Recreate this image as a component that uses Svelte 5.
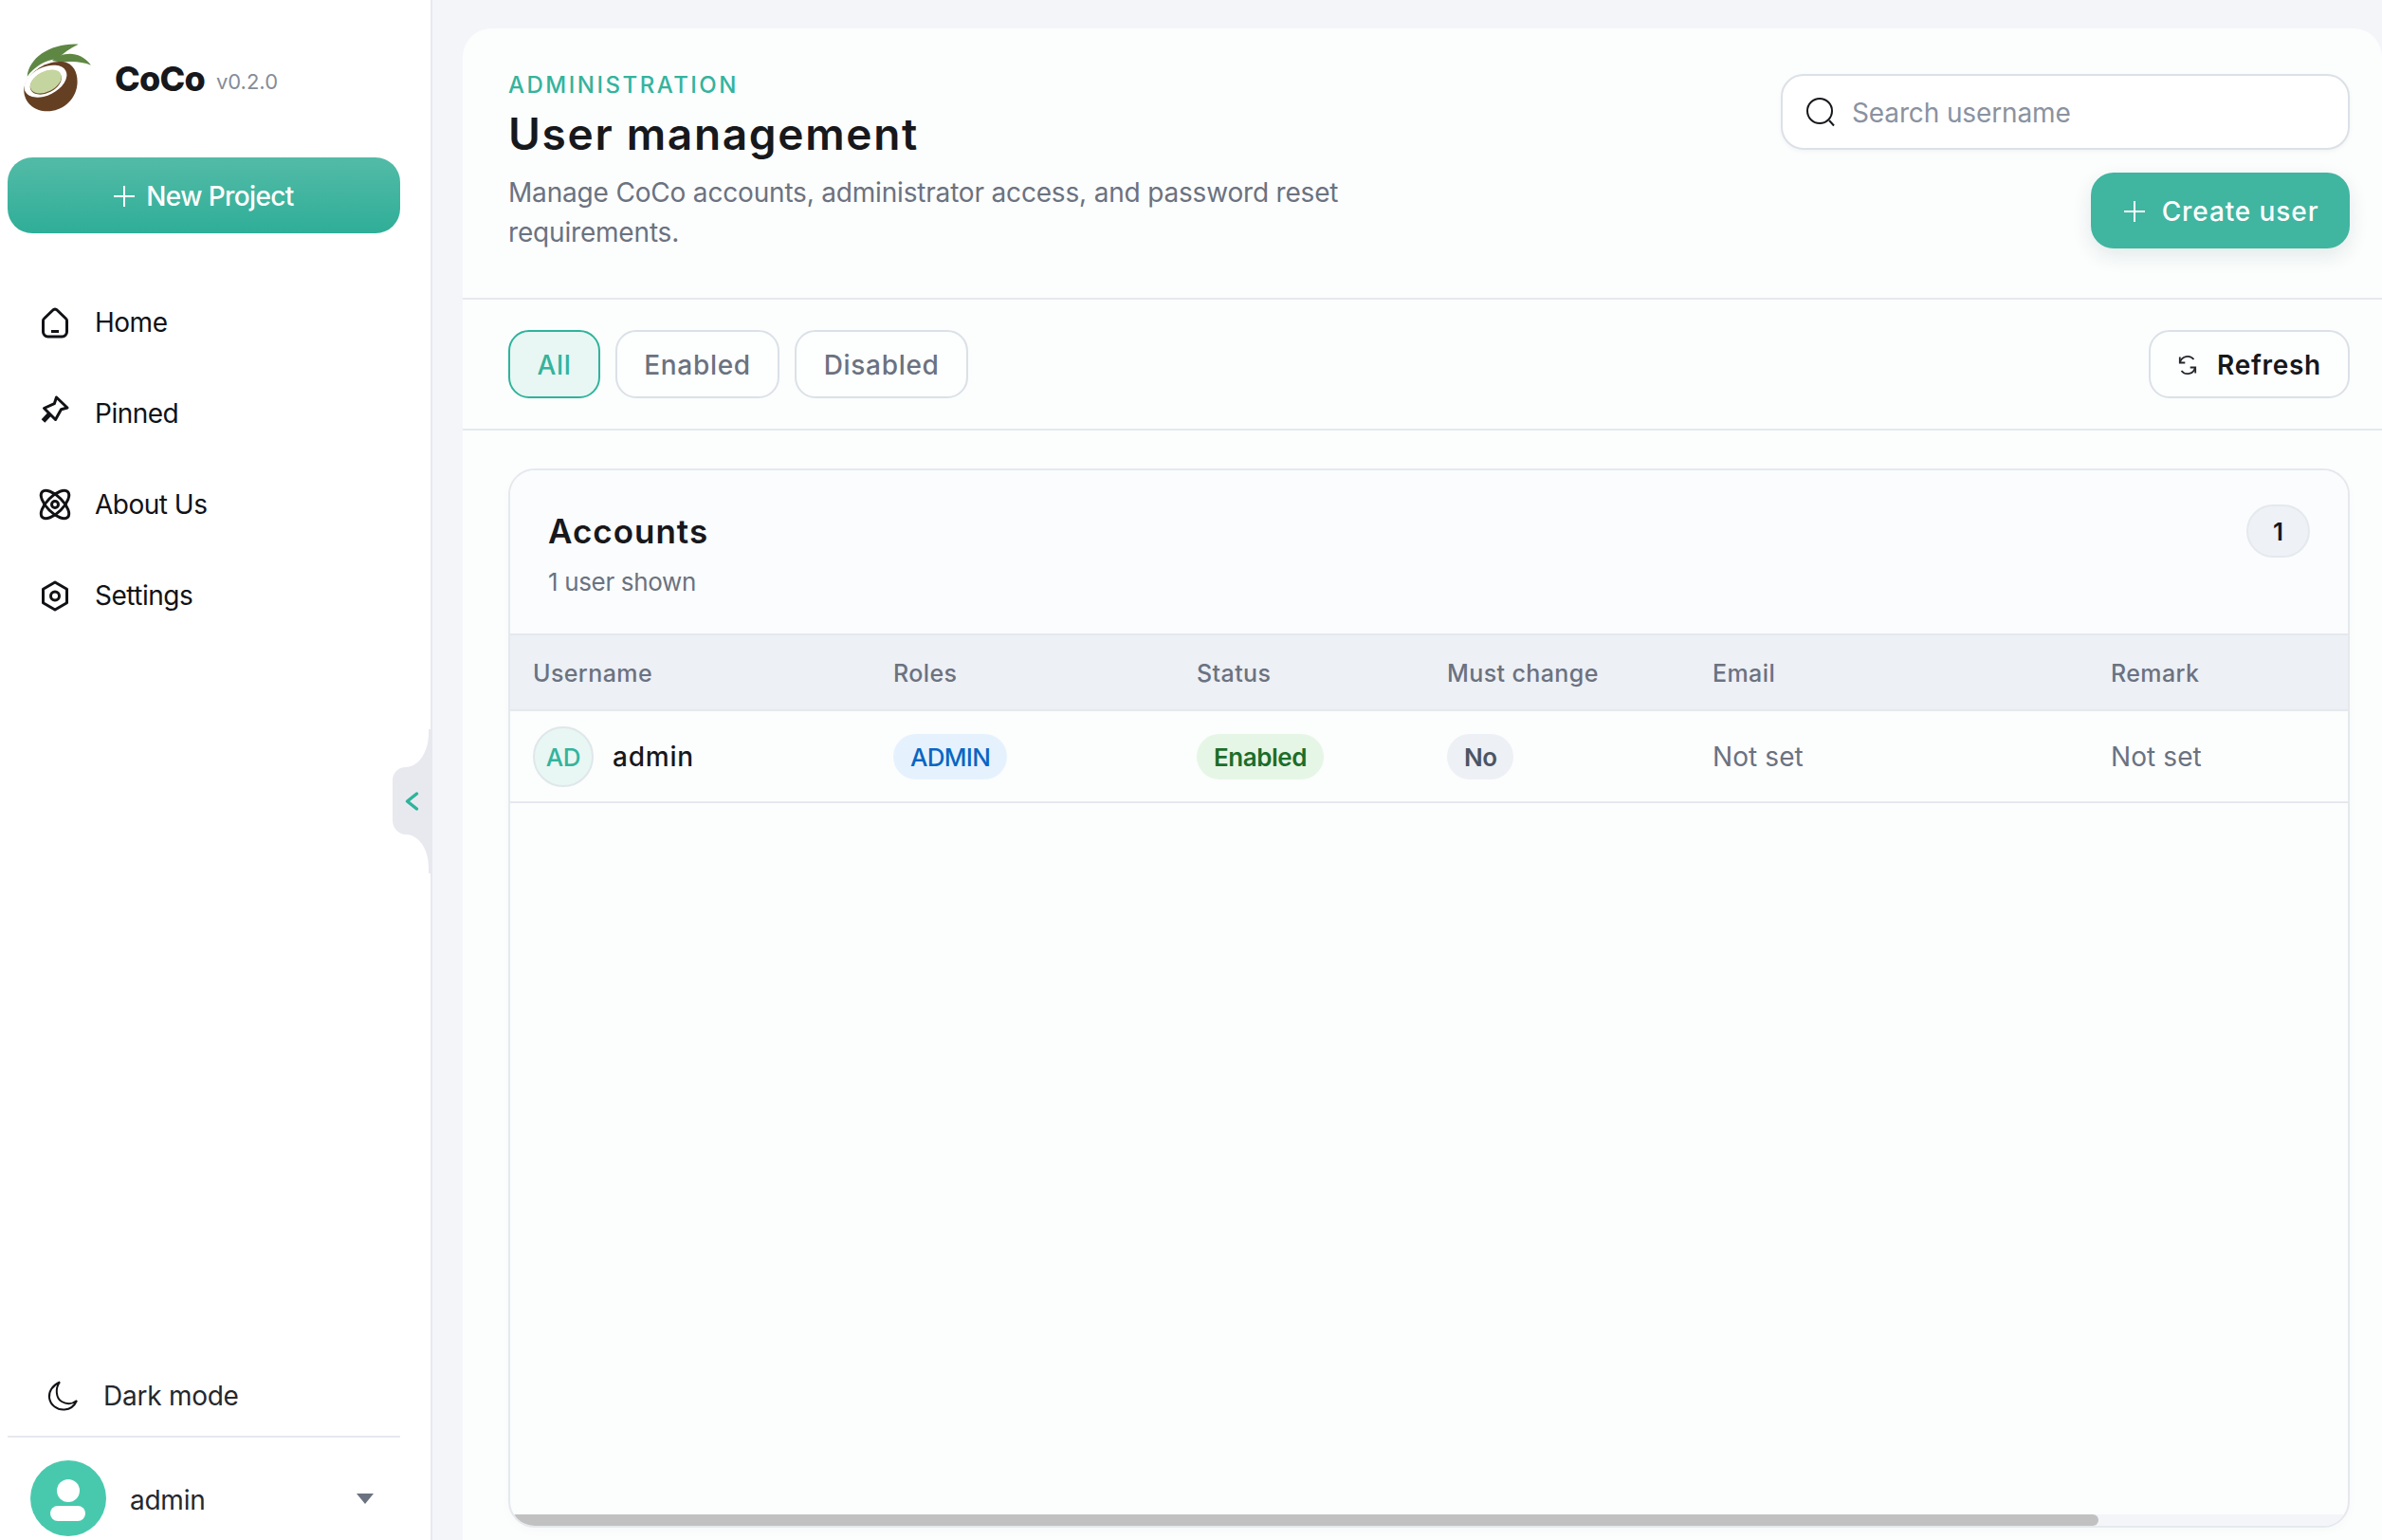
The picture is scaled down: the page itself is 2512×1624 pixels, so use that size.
<script>
  const nav = ['Home', 'Pinned', 'About Us', 'Settings'];
  const filters = ['All', 'Enabled', 'Disabled'];
  const columns = ['Username', 'Roles', 'Status', 'Must change', 'Email', 'Remark'];
  const tableWidth = 2240;
  const viewportWidth = 1936;
  const thumbShare = (viewportWidth / tableWidth) * 100;
</script>

<div class="app">
  <aside class="sidebar">
    <div class="brand">
      <svg class="logo" viewBox="45 45 216 219" aria-hidden="true">
        <path fill="#5f8744" d="M56 152C62 92 130 46 218 50C192 62 172 76 152 96C112 100 78 122 56 152Z"/>
        <path fill="#5f8744" d="M135 102C165 74 222 68 258 116C228 104 192 102 166 108C156 106 146 104 135 102Z"/>
        <path fill="#653f22" d="M46 188C56 138 120 98 172 106C205 112 218 145 214 180C208 228 165 262 120 262C75 262 42 230 46 188Z"/>
        <ellipse cx="114" cy="167" rx="72" ry="44" transform="rotate(-27 114 167)" fill="#fff"/>
        <ellipse cx="115" cy="171" rx="53" ry="33" transform="rotate(-27 115 171)" fill="#6f4c2c"/>
        <ellipse cx="115" cy="168" rx="53" ry="32" transform="rotate(-27 115 168)" fill="#c5d59f"/>
      </svg>
      <span class="name">CoCo</span>
      <span class="version">v0.2.0</span>
    </div>

    <button class="new-project">
      <svg class="plus" viewBox="0 0 22 22" aria-hidden="true"><path d="M11 0v22M0 11h22"/></svg>
      New Project
    </button>

    <nav class="nav">
      {#each nav as item}
        <a class="nav-item" href="#top">
          <span class="nav-icon">
            {#if item === 'Home'}
              <svg width="30" height="33" viewBox="0 0 30 33" aria-hidden="true"><path d="M15 2a3 3 0 0 1 2.200 1l9.300 9a3 3 0 0 1 1 2.300V26a5 5 0 0 1-5 5H7.500a5 5 0 0 1-5-5V14.300a3 3 0 0 1 1-2.300l9.300-9A3 3 0 0 1 15 2Z"/><path d="M11 25.500h8"/></svg>
            {:else if item === 'Pinned'}
              <svg class="pin" width="30" height="30" viewBox="0 0 30 30" aria-hidden="true"><path d="M16.500 2l11.500 11-6.500 1.800-6 10.700L3.500 13.500l10.800-4.800z" stroke-linejoin="round"/><path d="M9 20l-6.500 7" stroke-width="5"/></svg>
            {:else if item === 'About Us'}
              <svg width="30" height="30" viewBox="0 0 30 30" aria-hidden="true"><ellipse cx="15" cy="15" rx="19" ry="8.500" transform="rotate(45 15 15)"/><ellipse cx="15" cy="15" rx="19" ry="8.500" transform="rotate(-45 15 15)"/><circle cx="15" cy="15" r="3.500"/></svg>
            {:else}
              <svg width="30" height="33" viewBox="0 0 30 33" aria-hidden="true"><path d="M15 2l12.500 7.200v14.600L15 31 2.500 23.800V9.200L15 2Z" stroke-linejoin="round"/><circle cx="15" cy="16.500" r="4.500"/></svg>
            {/if}
          </span>
          {item}
        </a>
      {/each}
    </nav>

    <div class="sidebar-foot">
      <div class="dark-mode">
        <svg width="32" height="32" viewBox="0 0 32 32" aria-hidden="true"><path d="M13 1.500C5 5 1.200 12 2 18c1 7.500 8 13 16 12.500 6-.4 10.500-4 13-9.500-5 4-11 4-16 1C9 18.500 8 8 13 1.500Z"/></svg>
        Dark mode
      </div>
      <div class="user">
        <span class="avatar">
          <svg width="80" height="80" viewBox="0 0 80 80" aria-hidden="true"><circle cx="40" cy="32" r="12" fill="#fff"/><rect x="21" y="48" width="37" height="16" rx="8" fill="#fff"/></svg>
        </span>
        <span class="user-name">admin</span>
        <span class="caret"></span>
      </div>
    </div>

    <svg class="collapse" width="42" height="152" viewBox="0 0 42 152" aria-hidden="true">
      <path fill="#e8e9ef" d="M38 0V4C38 26 26 40 14 40C6 40 0 46 0 54V96C0 104 6 111 14 111C26 111 38 124 38 146V152H42V0Z"/>
      <path fill="none" stroke="#2fb39c" stroke-width="3.500" stroke-linecap="round" stroke-linejoin="round" d="M25.500 68L15.500 76L25.500 84"/>
    </svg>
  </aside>

  <main class="main">
    <section class="panel">
      <header class="panel-head">
        <div class="intro">
          <div class="eyebrow">ADMINISTRATION</div>
          <h1>User management</h1>
          <p>Manage CoCo accounts, administrator access, and password reset requirements.</p>
        </div>
        <div class="actions">
          <label class="search">
            <svg width="32" height="32" viewBox="0 0 32 32" aria-hidden="true"><circle cx="15" cy="15" r="13"/><path d="M25 25l5 5.500"/></svg>
            <input placeholder="Search username" aria-label="Search username" />
          </label>
          <button class="create">
            <svg class="plus" viewBox="0 0 22 22" aria-hidden="true"><path d="M11 0v22M0 11h22"/></svg>
            Create user
          </button>
        </div>
      </header>

      <div class="filter-bar">
        <div class="filters">
          {#each filters as f, i}
            <button class="chip" class:active={i === 0}>{f}</button>
          {/each}
        </div>
        <button class="chip refresh">
          <svg width="22" height="22" viewBox="0 0 22 22" aria-hidden="true"><path d="M3 8.500A8.200 8.200 0 0 1 17.500 5"/><path d="M2.800 2.500v6h5.500"/><path d="M19 13.500A8.200 8.200 0 0 1 4.500 17"/><path d="M19.200 19.500v-6h-5.500"/></svg>
          Refresh
        </button>
      </div>

      <div class="body">
        <div class="card">
          <div class="card-head">
            <div>
              <h2>Accounts</h2>
              <div class="shown">1 user shown</div>
            </div>
            <span class="count">1</span>
          </div>
          <div class="scroller">
            <table style="width:{tableWidth}px">
              <colgroup>
                <col class="c1"/><col class="c2"/><col class="c3"/><col class="c4"/><col class="c5"/><col class="c6"/>
              </colgroup>
              <thead>
                <tr>{#each columns as c}<th>{c}</th>{/each}</tr>
              </thead>
              <tbody>
                <tr>
                  <td><div class="who"><span class="initials">AD</span><span class="who-name">admin</span></div></td>
                  <td><span class="pill blue">ADMIN</span></td>
                  <td><span class="pill green">Enabled</span></td>
                  <td><span class="pill grey">No</span></td>
                  <td class="muted">Not set</td>
                  <td class="muted">Not set</td>
                </tr>
              </tbody>
            </table>
          </div>
          <div class="scrollbar"><div class="thumb" style="width:{thumbShare}%"></div></div>
        </div>
      </div>
    </section>
  </main>
</div>

<style>
  :global(body) {
    margin: 0;
    font-family: Inter, "Liberation Sans", sans-serif;
    background: #f3f5f9;
    color: #17181c;
  }
  button, input { font-family: inherit; }
  .app { display: flex; height: 100vh; min-height: 1624px; overflow: hidden; }

  .sidebar {
    position: relative;
    box-sizing: border-box;
    width: 456px;
    flex: none;
    background: #fff;
    border-right: 2px solid #e8e9ef;
    display: flex;
    flex-direction: column;
    padding: 0 32px 0 8px;
  }
  .brand { display: flex; align-items: center; height: 73px; margin-top: 45px; padding-left: 17px; }
  .logo { width: 72px; height: 73px; flex: none; }
  .name { margin-left: 24px; margin-top: 2px; font-size: 36px; font-weight: 800; letter-spacing: -0.8px; color: #17181c; }
  .version { margin-left: 12px; margin-top: 8px; font-size: 22px; color: #858c99; }

  .plus { width: 22px; height: 22px; fill: none; stroke: #fff; stroke-width: 2; flex: none; }
  .new-project {
    margin-top: 48px;
    height: 80px;
    padding: 2px 0 0;
    border: 0;
    border-radius: 26px;
    background: linear-gradient(180deg, #53bba7, #2fae98);
    color: #fff;
    font-size: 28px;
    font-weight: 500;
    letter-spacing: -0.6px;
    display: flex;
    align-items: center;
    justify-content: center;
    gap: 12px;
  }

  .nav { display: flex; flex-direction: column; margin-top: 46px; padding-left: 35px; }
  .nav-item {
    height: 96px;
    display: flex;
    align-items: center;
    gap: 27px;
    color: #111216;
    font-size: 28px;
    letter-spacing: -0.5px;
    text-decoration: none;
  }
  .nav-icon { width: 30px; height: 34px; display: flex; align-items: center; justify-content: center; flex: none; }
  .nav-icon svg { fill: none; stroke: #111216; stroke-width: 3; overflow: visible; }
  .nav-icon .pin { margin-top: -8px; }

  .sidebar-foot { margin-top: auto; }
  .dark-mode {
    display: flex;
    align-items: center;
    gap: 27px;
    height: 64px;
    padding: 1px 0 0 42px;
    margin-bottom: 10px;
    font-size: 28px;
    letter-spacing: -0.25px;
    color: #26272c;
  }
  .dark-mode svg { fill: none; stroke: #111216; stroke-width: 2; flex: none; }
  .user {
    display: flex;
    align-items: center;
    border-top: 2px solid #e8e9ef;
    padding: 24px 28px 4px 24px;
  }
  .avatar { width: 80px; height: 80px; border-radius: 50%; background: #48c9ae; flex: none; display: block; }
  .avatar svg { display: block; }
  .user-name { margin-left: 25px; padding-top: 3px; font-size: 28px; letter-spacing: -0.25px; color: #26272c; flex: 1; }
  .caret { width: 0; height: 0; border-left: 9px solid transparent; border-right: 9px solid transparent; border-top: 11px solid #6b7280; }
  .collapse { position: absolute; top: 769px; right: -2px; }

  .main { flex: 1; min-width: 0; padding: 30px 0 0 32px; display: flex; }
  .panel {
    flex: 1;
    min-width: 0;
    background: #fcfdfd;
    border-radius: 30px 30px 0 0;
    display: flex;
    flex-direction: column;
  }
  .panel-head {
    display: flex;
    justify-content: space-between;
    padding: 48px 34px 48px 48px;
    border-bottom: 2px solid #e5e9ee;
  }
  .eyebrow { font-size: 24px; line-height: 24px; font-weight: 500; letter-spacing: 2.5px; color: #35b39c; }
  h1 { margin: 11px 0 0; font-size: 46px; line-height: 56px; font-weight: 600; letter-spacing: 1.7px; color: #17181c; }
  .intro p { margin: 13px 0 0; width: 900px; font-size: 28px; line-height: 42px; color: #6b7280; letter-spacing: -0.18px; }
  .actions { display: flex; flex-direction: column; align-items: flex-end; gap: 24px; }
  .search {
    box-sizing: border-box;
    width: 600px;
    height: 80px;
    border: 2px solid #dbe1e7;
    border-radius: 24px;
    background: #fff;
    display: flex;
    align-items: center;
    gap: 17px;
    padding-left: 24px;
    box-shadow: 0 2px 4px rgba(20, 30, 40, 0.04);
  }
  .search svg { fill: none; stroke: #17181c; stroke-width: 2; flex: none; }
  .search input { flex: 1; min-width: 0; border: 0; outline: 0; background: transparent; font-size: 28px; letter-spacing: -0.13px; color: #17181c; padding: 2px 0 0; }
  .search input::placeholder { color: #8a92a0; opacity: 1; }
  .create {
    box-sizing: border-box;
    width: 273px;
    height: 80px;
    padding: 2px 0 0 2px;
    border: 0;
    border-radius: 24px;
    background: #40b5a0;
    color: #fff;
    font-size: 28px;
    font-weight: 500;
    letter-spacing: 0.9px;
    display: flex;
    align-items: center;
    justify-content: center;
    gap: 18px;
    box-shadow: 0 8px 20px rgba(40, 100, 90, 0.12);
  }

  .filter-bar {
    display: flex;
    justify-content: space-between;
    padding: 32px 34px 32px 48px;
    border-bottom: 2px solid #e5e9ee;
  }
  .filters { display: flex; gap: 16px; }
  .chip {
    box-sizing: border-box;
    height: 72px;
    padding: 2px 28.4px 0;
    border: 2px solid #dbe1e7;
    border-radius: 22px;
    background: #fdfefe;
    color: #6b7280;
    font-size: 28px;
    font-weight: 500;
    letter-spacing: 0.7px;
  }
  .chip.active { color: #35b39c; background: #e8f7f3; border-color: #2fb39c; }
  .refresh {
    width: 212px;
    padding: 2px 0 0;
    color: #17181c;
    font-weight: 600;
    display: flex;
    align-items: center;
    justify-content: center;
    gap: 20px;
  }
  .refresh svg { fill: none; stroke: #26272c; stroke-width: 1.800; flex: none; }

  .body { flex: 1; min-height: 0; display: flex; padding: 40px 34px 13px 48px; }
  .card {
    flex: 1;
    min-width: 0;
    border: 2px solid #e5e9ee;
    border-radius: 28px;
    background: #fcfdfd;
    overflow: hidden;
    display: flex;
    flex-direction: column;
    box-shadow: 0 4px 12px rgba(20, 30, 40, 0.02);
  }
  .card-head {
    box-sizing: border-box;
    height: 172px;
    flex: none;
    display: flex;
    justify-content: space-between;
    align-items: flex-start;
    padding: 36px 40px 0;
    background: #fafcfd;
  }
  h2 { margin: 6px 0 0; font-size: 35px; line-height: 44px; font-weight: 600; letter-spacing: 1px; color: #17181c; }
  .shown { margin-top: 15px; font-size: 26px; line-height: 34px; color: #6b7280; letter-spacing: -0.35px; }
  .count {
    box-sizing: border-box;
    width: 67px;
    height: 56px;
    border-radius: 28px;
    border: 2px solid #e5e9ee;
    background: #eef1f5;
    font-size: 26px;
    font-weight: 600;
    display: flex;
    align-items: center;
    justify-content: center;
  }
  .scroller { flex: 1; min-height: 0; overflow: hidden; }
  .scrollbar { flex: none; height: 12px; background: #f3f5f9; }
  .thumb { height: 100%; background: #c1c1c1; border-radius: 6px; }
  table { table-layout: fixed; border-collapse: separate; border-spacing: 0; }
  .c1 { width: 380px; }
  .c2 { width: 320px; }
  .c3 { width: 264px; }
  .c4 { width: 280px; }
  .c5 { width: 420px; }
  .c6 { width: 576px; }
  th {
    box-sizing: border-box;
    height: 82px;
    padding: 2px 0 0 24px;
    text-align: left;
    background: #edf0f5;
    border-top: 2px solid #e5e9ee;
    border-bottom: 2px solid #e5e9ee;
    font-size: 25px;
    font-weight: 500;
    letter-spacing: 0.4px;
    color: #6b7280;
  }
  td {
    box-sizing: border-box;
    height: 97px;
    padding: 1px 0 0 24px;
    border-bottom: 2px solid #e5e9ee;
    font-size: 28px;
  }
  .muted { color: #6b7280; letter-spacing: 0.1px; }
  .who { display: flex; align-items: center; gap: 20px; }
  .initials {
    box-sizing: border-box;
    width: 64px;
    height: 64px;
    border-radius: 50%;
    border: 2px solid #dfe7ea;
    background: #e8f7f3;
    color: #35b39c;
    font-size: 26px;
    font-weight: 500;
    letter-spacing: -0.4px;
    display: flex;
    align-items: center;
    justify-content: center;
  }
  .who-name { font-size: 28px; font-weight: 500; letter-spacing: 0.8px; color: #17181c; }
  .pill {
    display: inline-flex;
    align-items: center;
    height: 48px;
    padding: 0 18px;
    border-radius: 24px;
    font-size: 26px;
    font-weight: 500;
    letter-spacing: -0.7px;
    vertical-align: middle;
  }
  .blue { background: #e5f2fe; color: #0a66c2; }
  .green { background: #e6f6e6; color: #1b6e2a; font-weight: 600; letter-spacing: -0.45px; }
  .grey { background: #edf0f5; color: #4b5563; font-weight: 600; letter-spacing: -0.6px; }
</style>
